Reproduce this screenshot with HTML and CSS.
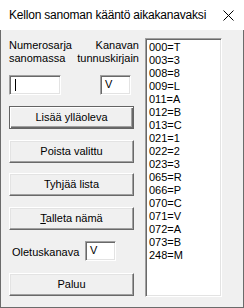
FILE: index.html
```html
<!DOCTYPE html>
<html>
<head>
<meta charset="utf-8">
<link rel="stylesheet" href="styles.css">
</head>
<body>
<div class="window">
  <div class="titlebar">
    <span class="title">Kellon sanoman kääntö aikakanavaksi</span>
    <svg class="close" width="11" height="11" viewBox="0 0 11 11"><path d="M0.5 0.5 L10.5 10.5 M10.5 0.5 L0.5 10.5" stroke="#000" stroke-width="1" fill="none"/></svg>
  </div>
  <div class="client">
    <div class="left">
      <div class="labels">
        <div class="lbl">Numerosarja<br>sanomassa</div>
        <div class="lbl right">Kanavan<br>tunnuskirjain</div>
      </div>
      <div class="inputs">
        <div class="edit num"><span class="caret"></span></div>
        <div class="edit ch">V</div>
      </div>
      <div class="btn default">Lisää ylläoleva</div>
      <div class="btn">Poista valittu</div>
      <div class="btn tight">Tyhjää lista</div>
      <div class="btn"><span><u>T</u>alleta nämä</span></div>
      <div class="oletus">
        <span class="olbl">Oletuskanava</span>
        <div class="edit ch2">V</div>
      </div>
      <div class="btn">Paluu</div>
    </div>
    <div class="listbox">
      <div>000=T</div>
      <div>003=3</div>
      <div>008=8</div>
      <div>009=L</div>
      <div>011=A</div>
      <div>012=B</div>
      <div>013=C</div>
      <div>021=1</div>
      <div>022=2</div>
      <div>023=3</div>
      <div>065=R</div>
      <div>066=P</div>
      <div>070=C</div>
      <div>071=V</div>
      <div>072=A</div>
      <div>073=B</div>
      <div>248=M</div>
    </div>
  </div>
</div>
</body>
</html>
```

FILE: styles.css
```css
html, body {
  margin: 0;
  padding: 0;
  background: #f0f0f0;
}
.window {
  width: 244px;
  height: 308px;
  box-sizing: border-box;
  display: flex;
  flex-direction: column;
  font-family: "Liberation Sans", Arial, sans-serif;
  font-size: 11px;
  color: #000;
}
.titlebar {
  height: 30px;
  flex: none;
  background: #fff;
  display: flex;
  align-items: center;
  padding-left: 9px;
  padding-right: 10px;
}
.title {
  font-family: "Liberation Sans", Arial, sans-serif;
  font-size: 12px;
  letter-spacing: -0.2px;
  color: #000;
  flex: 1;
}
.close {
  display: block;
}
.client {
  flex: 1;
  display: flex;
  align-items: flex-start;
  padding: 8px 0 0 8px;
  border-left: 1px solid #6b6b6b;
  border-right: 1px solid #6b6b6b;
  border-bottom: 1px solid #6b6b6b;
}
.left {
  width: 125px;
  display: flex;
  flex-direction: column;
  gap: 11px;
}
.labels {
  display: flex;
  justify-content: space-between;
  width: 130px;
  line-height: 13px;
  margin-top: 1px;
}
.lbl.right {
  text-align: right;
}
.inputs {
  display: flex;
  justify-content: space-between;
  width: 122px;
  margin-top: -1px;
}
.edit {
  height: 20px;
  box-sizing: border-box;
  background: #fff;
  border-style: solid;
  border-width: 1px;
  border-color: #a0a0a0 #fff #fff #a0a0a0;
  box-shadow: inset 1px 1px 0 #696969, inset -1px -1px 0 #e3e3e3;
  padding: 2px 0 0 4px;
  line-height: 13px;
  position: relative;
}
.num { width: 52px; }
.ch { width: 31px; }
.ch2 { width: 31px; }
.caret {
  position: absolute;
  left: 5px;
  top: 3px;
  width: 1px;
  height: 12px;
  background: #000;
}
.btn {
  height: 23px;
  box-sizing: border-box;
  display: flex;
  align-items: center;
  justify-content: center;
  background: #f0f0f0;
  border-style: solid;
  border-width: 1px;
  border-color: #fff #696969 #696969 #fff;
  box-shadow: inset -1px -1px 0 #a0a0a0, inset 1px 1px 0 #e3e3e3;
  padding-bottom: 1px;
}
.btn.tight {
  margin-top: -1px;
}
.btn.default {
  border: 1px solid #646464;
  box-shadow: inset 1px 1px 0 #fff, inset -1px -1px 0 #696969, inset -2px -2px 0 #a0a0a0;
}
.oletus {
  display: flex;
  align-items: center;
  padding-left: 3px;
  margin-bottom: 1px;
}
.olbl {
  width: 73px;
  padding-top: 2px;
}
.listbox {
  margin-left: 11px;
  width: 77px;
  height: 259px;
  box-sizing: border-box;
  background: #fff;
  border-style: solid;
  border-width: 1px;
  border-color: #a0a0a0 #fff #fff #a0a0a0;
  box-shadow: inset 1px 1px 0 #696969, inset -1px -1px 0 #e3e3e3;
  padding: 2px 0 0 3px;
  line-height: 13px;
}
```
